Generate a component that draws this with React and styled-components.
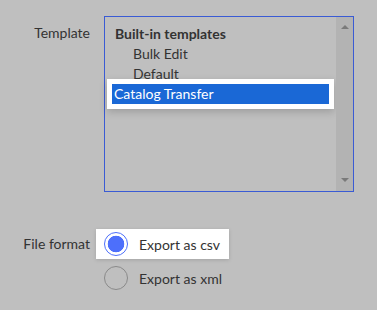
import React, { useState } from 'react'
import styled, { createGlobalStyle } from 'styled-components'

const GlobalStyle = createGlobalStyle`
  html, body {
    margin: 0;
    background: #bfbfbf;
  }
  body {
    font-family: 'Lato', 'Noto Sans', sans-serif;
    font-size: 14px;
    color: #333;
  }
`

const templates = {
  group: 'Built-in templates',
  items: ['Bulk Edit', 'Default', 'Catalog Transfer'],
}

const App = () => {
  const [selected, setSelected] = useState('Catalog Transfer')
  const [format, setFormat] = useState('csv')

  return (
    <>
      <GlobalStyle />
      <Form>
        <Label>Template</Label>
        <ListBox>
          <Options>
            <GroupLabel>{templates.group}</GroupLabel>
            {templates.items.map((item) => (
              <Option
                key={item}
                $active={item === selected}
                onClick={() => setSelected(item)}
              >
                {item}
              </Option>
            ))}
          </Options>
          <ScrollBar>
            <Arrow />
            <Arrow $down />
          </ScrollBar>
        </ListBox>

        <Label $radio>File format</Label>
        <RadioGroup>
          {['csv', 'xml'].map((f) => (
            <RadioRow
              key={f}
              $focused={f === format}
              onClick={() => setFormat(f)}
            >
              <RadioCircle $checked={f === format} />
              <span>Export as {f}</span>
            </RadioRow>
          ))}
        </RadioGroup>
      </Form>
    </>
  )
}

const Form = styled.div`
  display: grid;
  grid-template-columns: 90px 250px;
  column-gap: 14px;
  row-gap: 37px;
  padding-top: 16px;
`

const Label = styled.div`
  text-align: right;
  line-height: 20px;
  padding-top: ${({ $radio }) => ($radio ? '5px' : '7px')};
`

const ListBox = styled.div`
  display: flex;
  height: 176px;
  box-sizing: border-box;
  border: 1px solid #3a5bd4;
`

const Options = styled.div`
  flex: 1;
  padding: 7px 7px 0 7px;
`

const GroupLabel = styled.div`
  font-weight: 700;
  line-height: 20px;
  padding-left: 3px;
`

const Option = styled.div`
  line-height: 20px;
  cursor: default;
  ${({ $active }) =>
    $active
      ? `
    padding-left: 2px;
    background: #1a68d6;
    color: #fff;
    box-shadow: 0 0 0 5px #fff, 0 3px 8px 5px rgba(0, 0, 0, 0.18);
  `
      : `
    padding-left: 21px;
  `}
`

const ScrollBar = styled.div`
  width: 17px;
  background: #b3b3b3;
  display: flex;
  flex-direction: column;
  justify-content: space-between;
  align-items: center;
  padding: 8px 0 9px;
  box-sizing: border-box;
`

const Arrow = styled.div`
  width: 0;
  height: 0;
  border-left: 4px solid transparent;
  border-right: 4px solid transparent;
  ${({ $down }) =>
    $down ? 'border-top: 4px solid #7a7a7a;' : 'border-bottom: 4px solid #7a7a7a;'}
`

const RadioGroup = styled.div`
  display: flex;
  flex-direction: column;
  align-items: flex-start;
  gap: 4px;
  margin-left: -8px;
`

const RadioRow = styled.div`
  display: flex;
  align-items: center;
  gap: 11px;
  height: 30px;
  padding: 0 9px 0 8px;
  background: ${({ $focused }) => ($focused ? '#fff' : 'transparent')};
  box-shadow: ${({ $focused }) =>
    $focused ? '0 1px 4px rgba(0, 0, 0, 0.15)' : 'none'};
  cursor: default;
`

const RadioCircle = styled.span`
  width: 24px;
  height: 24px;
  box-sizing: border-box;
  border-radius: 50%;
  border: 1.5px solid ${({ $checked }) => ($checked ? '#4d6ffb' : '#8a8a8a')};
  background: ${({ $checked }) =>
    $checked ? 'radial-gradient(circle, #4d6ffb 0 8px, #fff 8.6px)' : 'transparent'};
`

export default App
